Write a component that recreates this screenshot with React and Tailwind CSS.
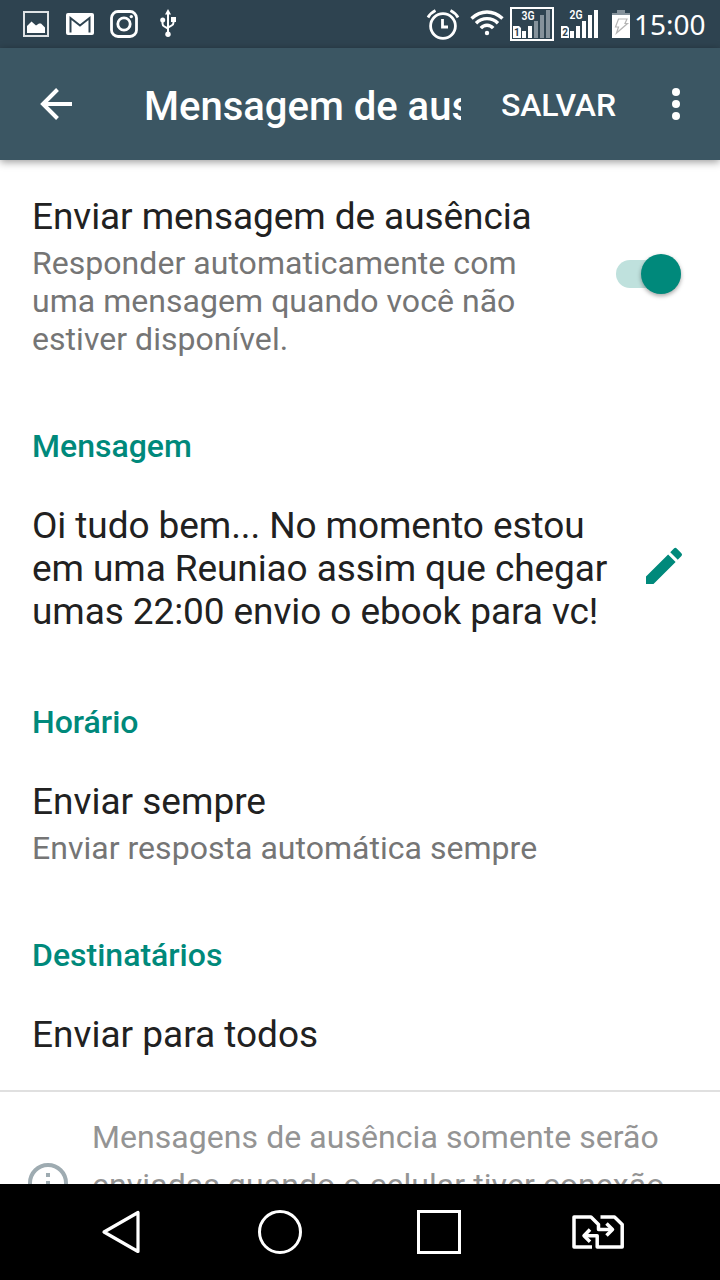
import React, { useState } from 'react'
import { MdEdit } from 'react-icons/md'

const PictureIcon = () => (
  <svg className="w-[26px] h-[26px]" viewBox="0 0 26 26" fill="none">
    <rect x="1" y="1" width="24" height="24" stroke="#dfe3e5" strokeWidth="2" />
    <path d="M4 22v-7l4.500-4.500L13 14.500l3-2h2l4 4V22z" fill="#fff" />
  </svg>
)

const MailIcon = () => (
  <svg className="w-[28px] h-[24px]" viewBox="0 0 28 24">
    <rect x="0" y="1" width="28" height="22" rx="2" fill="#fff" />
    <path d="M4.500 20.500V6L14 13.500 23.500 6v14.500" fill="none" stroke="#2e4350" strokeWidth="2" />
    <path d="M3 1l11 8.500L25 1z" fill="#fff" />
  </svg>
)

const CameraIcon = () => (
  <svg className="w-[28px] h-[28px]" viewBox="0 0 28 28" fill="none" stroke="#fff">
    <rect x="1.500" y="1.500" width="25" height="25" rx="6.500" strokeWidth="2.800" />
    <circle cx="14" cy="14" r="6.200" strokeWidth="2.800" />
    <circle cx="21.300" cy="6.600" r="1.700" fill="#fff" stroke="none" />
  </svg>
)

const UsbIcon = () => (
  <svg className="w-[16px] h-[28px]" viewBox="0 0 16 28" fill="none" stroke="#fff" strokeWidth="2">
    <path d="M8 4v21M2.500 11v3.500q0 2 1.800 3L8 19.500M13.500 11v2.500q0 2-1.800 3L8 18.500" />
    <path d="M8 0l3 5.500H5zM11 8h5v5h-5z" fill="#fff" stroke="none" />
    <circle cx="2.700" cy="11" r="2.500" fill="#fff" stroke="none" />
    <circle cx="8" cy="25.200" r="2.700" fill="#fff" stroke="none" />
  </svg>
)

const AlarmIcon = () => (
  <svg className="w-[34px] h-[32px]" viewBox="0 0 34 32" fill="none" stroke="#fff" strokeWidth="2.800">
    <circle cx="17" cy="18" r="12.400" />
    <path d="M2 9.500Q4.500 5 9.500 2.500M32 9.500Q29.500 5 24.500 2.500M16.500 11v8H22" />
  </svg>
)

const WifiIcon = () => (
  <svg className="w-[34px] h-[26px]" viewBox="0 0 34 26" fill="none" stroke="#fff" strokeWidth="3.400">
    <path d="M1.500 8.500Q8.500 2 17 2t15.500 6.500M6 13.200q4.700-4.600 11-4.600t11 4.600M10.800 18.200Q13.500 15.200 17 15.200t6.200 3" />
    <circle cx="17" cy="23" r="2.200" fill="#fff" stroke="none" />
  </svg>
)

const Signal3G = () => (
  <svg className="w-[44px] h-[34px]" viewBox="0 0 44 34">
    <rect x="1" y="1" width="42" height="32" fill="none" stroke="#fff" strokeWidth="2" />
    <text x="11.500" y="13.200" fontFamily="Roboto, sans-serif" fontSize="12" fontWeight="600" fill="#fff" textLength="13" lengthAdjust="spacingAndGlyphs">3G</text>
    <path d="M3 19h6l2 2v10H3z" fill="#fff" />
    <text x="4" y="29.300" fontFamily="Roboto, sans-serif" fontSize="10" fontWeight="700" fill="#2e4350">1</text>
    <path d="M12 24h4v7h-4zM18 19h4v12h-4z" fill="#fff" />
    <path d="M24 14h4v17h-4zM30 8h4v23h-4zM36 3h4v28h-4z" fill="#85929b" />
  </svg>
)

const Signal2G = () => (
  <svg className="w-[38px] h-[28px]" viewBox="0 0 38 28">
    <text x="8.500" y="9.200" fontFamily="Roboto, sans-serif" fontSize="12" fontWeight="600" fill="#fff" textLength="13" lengthAdjust="spacingAndGlyphs">2G</text>
    <path d="M0 16h6l2 2v10H0z" fill="#fff" />
    <text x="1.200" y="26.300" fontFamily="Roboto, sans-serif" fontSize="10" fontWeight="700" fill="#2e4350">2</text>
    <path d="M9 21h4v7H9zM15 16h4v12h-4zM21 11h4v17h-4zM27 5h4v23h-4zM33 0h4v28h-4z" fill="#fff" />
  </svg>
)

const BatteryIcon = () => (
  <svg className="w-[18px] h-[28px]" viewBox="0 0 18 28">
    <path d="M5 0h8v3h5v3H0V3h5z" fill="#85929b" />
    <path d="M0 5h18v23H0z" fill="#fff" />
    <path d="M6.500 9H15l-2 4.500h2.500L4.500 23l2-6H3.500z" fill="none" stroke="#b5b5b5" strokeWidth="1.200" />
  </svg>
)

const BackArrow = () => (
  <svg className="w-[32px] h-[32px]" viewBox="0 0 32 32" fill="none" stroke="#fff" strokeWidth="4">
    <path d="M32 16H3M17.500 1.500L3 16l14.500 14.500" />
  </svg>
)

const InfoIcon = () => (
  <svg className="w-[40px] h-[40px] shrink-0" viewBox="0 0 40 40" fill="none" stroke="#9eabb1" strokeWidth="4">
    <circle cx="20" cy="20" r="18" />
    <path d="M20 10v4M20 18v12" />
  </svg>
)

const NavBack = () => (
  <svg className="w-[40px] h-[44px]" viewBox="0 0 40 44" fill="none" stroke="#fff" strokeWidth="3.200">
    <path d="M37 2.500v39L3 22z" strokeLinejoin="round" />
  </svg>
)

const SimSwapIcon = () => (
  <svg className="w-[52px] h-[34px]" viewBox="0 0 52 34" fill="none" stroke="#fff" strokeWidth="3.500" strokeLinejoin="round">
    <path d="M20 32H2V2h17l7.500 7.500v5H40" />
    <path d="M28.500 2h14l7.700 7.500V32H25.200V20.800H12.500" />
    <path d="M34.500 8.500l6 6-6 6M18 14.500l-6 6.300 6 6" />
  </svg>
)

const SectionTitle = ({ children }) => (
  <h2 className="text-[32px] leading-[38px] font-medium text-[#00897b]">{children}</h2>
)

export default function App() {
  const [enabled, setEnabled] = useState(true)

  return (
    <div className="w-[720px] h-[1280px] flex flex-col overflow-hidden bg-white font-['Roboto',sans-serif]">
      {/* Status bar */}
      <div className="h-12 shrink-0 flex items-center bg-[#2e4350] text-white">
        <div className="flex items-center ml-[23px]">
          <PictureIcon />
          <div className="ml-[17px]"><MailIcon /></div>
          <div className="ml-4"><CameraIcon /></div>
          <div className="ml-[22px] -mt-0.5"><UsbIcon /></div>
        </div>
        <div className="flex items-center ml-auto mr-[15px]">
          <AlarmIcon />
          <div className="ml-[10px] -mt-0.5"><WifiIcon /></div>
          <div className="ml-[6px]"><Signal3G /></div>
          <div className="ml-[7px]"><Signal2G /></div>
          <div className="ml-[13px]"><BatteryIcon /></div>
          <span className="ml-1 w-[71px] whitespace-nowrap font-['Noto_Sans',sans-serif] text-[28px] leading-[48px]">15:00</span>
        </div>
      </div>

      {/* App bar */}
      <header className="h-28 shrink-0 flex items-center bg-[#3b5663] text-white shadow-[0_2px_8px_rgba(0,0,0,0.4)]">
        <button className="ml-10">
          <BackArrow />
        </button>
        <h1 className="ml-[72px] mt-1.5 w-[317px] overflow-hidden whitespace-nowrap text-[40px] leading-[48px] font-medium">
          Mensagem de ausência
        </h1>
        <button className="ml-10 mt-0.5 w-[116px] whitespace-nowrap text-left text-[32px] leading-[38px] font-medium tracking-[-0.15px]">SALVAR</button>
        <button className="ml-[55px] flex flex-col gap-1">
          <span className="size-2 rounded-full bg-white" />
          <span className="size-2 rounded-full bg-white" />
          <span className="size-2 rounded-full bg-white" />
        </button>
      </header>

      <main className="flex-1 min-h-0 overflow-hidden text-[#212121]">
        {/* Away message toggle */}
        <div className="flex items-start pt-[35px] pl-8 pr-[39px]">
          <div className="w-[540px]">
            <div className="text-[37px] leading-[43px] tracking-[-0.08px]">Enviar mensagem de ausência</div>
            <p className="mt-1.5 w-[510px] text-[32px] leading-[38px] tracking-[0.04px] text-[#757575]">
              Responder automaticamente com uma mensagem quando você não estiver disponível.
            </p>
          </div>
          <button
            role="switch"
            aria-checked={enabled}
            onClick={() => setEnabled(!enabled)}
            className="ml-11 mt-[65px] w-[65px] h-7 flex items-center justify-end rounded-full bg-[#bfe1dd]"
          >
            <span className="size-10 shrink-0 rounded-full bg-[#00897b] shadow-[0_2px_4px_rgba(0,0,0,0.35)]" />
          </button>
        </div>

        {/* Message */}
        <div className="mt-[69px] px-8">
          <SectionTitle>Mensagem</SectionTitle>
          <div className="mt-[39px] flex items-center">
            <p className="w-[590px] text-[37px] leading-[43px] tracking-[-0.09px]">
              Oi tudo bem... No momento estou em uma Reuniao assim que chegar umas 22:00 envio o ebook para vc!
            </p>
            <MdEdit className="ml-[18px] -mt-1.5 size-12 shrink-0 text-[#00897b]" />
          </div>
        </div>

        {/* Schedule */}
        <div className="mt-[70px] px-8">
          <SectionTitle>Horário</SectionTitle>
          <div className="mt-[39px] text-[37px] leading-[43px]">Enviar sempre</div>
          <div className="mt-[6px] text-[32px] leading-[38px] tracking-[0.03px] text-[#757575]">Enviar resposta automática sempre</div>
        </div>

        {/* Recipients */}
        <div className="mt-[69px] px-8">
          <SectionTitle>Destinatários</SectionTitle>
          <div className="mt-[39px] text-[37px] leading-[43px]">Enviar para todos</div>
        </div>

        {/* Connection notice */}
        <div className="mt-[34px] flex items-start border-t-2 border-[#e0e0e0] pt-[21px] pl-7">
          <div className="mt-[50px]"><InfoIcon /></div>
          <p className="ml-6 w-[590px] text-[32px] leading-[48px] tracking-[0.06px] text-[#949494]">
            Mensagens de ausência somente serão enviadas quando o celular tiver conexão
          </p>
        </div>
      </main>

      {/* Navigation bar */}
      <nav className="h-24 shrink-0 flex items-center bg-black">
        <button className="ml-[101px]"><NavBack /></button>
        <button className="ml-[117px] size-11 rounded-full border-3 border-white" />
        <button className="ml-[115px] size-11 border-3 border-white" />
        <button className="ml-[111px]"><SimSwapIcon /></button>
      </nav>
    </div>
  )
}
